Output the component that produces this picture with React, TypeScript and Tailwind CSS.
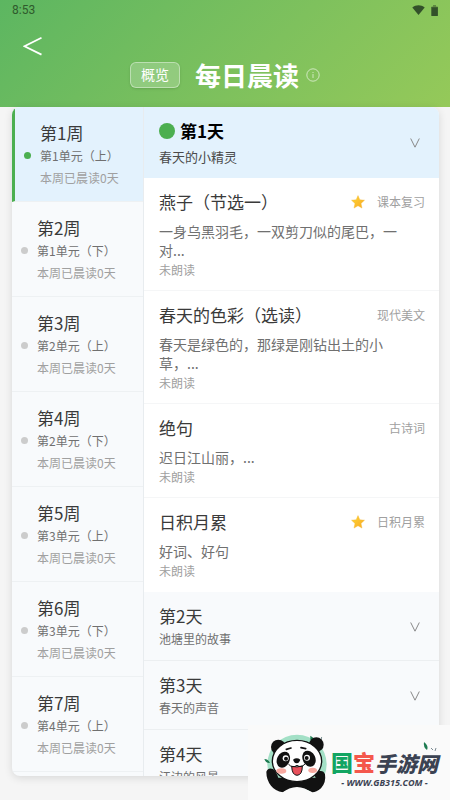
import { useState } from 'react';

interface Week {
  id: number;
  title: string;
  unit: string;
  readDays: number;
}

interface Article {
  title: string;
  excerpt: string;
  tag: string;
  starred?: boolean;
}

interface Day {
  id: number;
  title: string;
  topic: string;
  articles: Article[];
}

const weeks: Week[] = [
  { id: 1, title: '第1周', unit: '第1单元（上）', readDays: 0 },
  { id: 2, title: '第2周', unit: '第1单元（下）', readDays: 0 },
  { id: 3, title: '第3周', unit: '第2单元（上）', readDays: 0 },
  { id: 4, title: '第4周', unit: '第2单元（下）', readDays: 0 },
  { id: 5, title: '第5周', unit: '第3单元（上）', readDays: 0 },
  { id: 6, title: '第6周', unit: '第3单元（下）', readDays: 0 },
  { id: 7, title: '第7周', unit: '第4单元（上）', readDays: 0 },
];

const days: Day[] = [
  {
    id: 1,
    title: '第1天',
    topic: '春天的小精灵',
    articles: [
      {
        title: '燕子（节选一）',
        excerpt: '一身乌黑羽毛，一双剪刀似的尾巴，一对...',
        tag: '课本复习',
        starred: true,
      },
      {
        title: '春天的色彩（选读）',
        excerpt: '春天是绿色的，那绿是刚钻出土的小草，...',
        tag: '现代美文',
      },
      { title: '绝句', excerpt: '迟日江山丽，...', tag: '古诗词' },
      { title: '日积月累', excerpt: '好词、好句', tag: '日积月累', starred: true },
    ],
  },
  { id: 2, title: '第2天', topic: '池塘里的故事', articles: [] },
  { id: 3, title: '第3天', topic: '春天的声音', articles: [] },
  { id: 4, title: '第4天', topic: '江边的风景', articles: [] },
];

const StatusBar = () => (
  <div className="flex h-5 items-center justify-between px-3 text-[#2f5a2c]">
    <span className="font-['Roboto',sans-serif] text-xs">8:53</span>
    <div className="flex items-center gap-1.5 text-[#33502a]">
      <svg width="13" height="10" viewBox="0 0 13 10" fill="currentColor" aria-hidden="true">
        <path d="M6.5 10 0.3 2.6C3.8-.5 9.2-.5 12.7 2.6Z" />
      </svg>
      <svg width="7" height="11" viewBox="0 0 7 11" fill="currentColor" aria-hidden="true">
        <path opacity=".5" d="M2 0h3v1.4h1.3a.6.6 0 0 1 .6.6v1H.3V2a.6.6 0 0 1 .6-.6H2Z" />
        <path d="M.3 2.2h6.6v8.2a.6.6 0 0 1-.6.6H.9a.6.6 0 0 1-.6-.6Z" />
      </svg>
    </div>
  </div>
);

const Header = () => (
  <header className="shrink-0 bg-linear-135 from-[#5cb661] to-[#95c959] pb-[19px] text-white">
    <StatusBar />
    <button type="button" aria-label="返回" className="ml-[23px] mt-4 block">
      <svg width="19" height="20" viewBox="0 0 19 20" fill="none" stroke="currentColor" strokeWidth="1.8">
        <path d="M18.5 1.8 1.5 10.2 18.5 18.6" />
      </svg>
    </button>
    <div className="mt-1.5 flex h-[26px] items-center justify-center">
      <button
        type="button"
        className="h-[26px] w-[50px] rounded-md border border-white/40 bg-white/20 pb-0.5 text-sm leading-none shadow-sm"
      >
        概览
      </button>
      <h1 className="ml-[15px] text-[26px] font-bold leading-none">每日晨读</h1>
      <button type="button" aria-label="说明" className="ml-[7px] text-white/60">
        <svg width="14" height="14" viewBox="0 0 14 14" fill="none" stroke="currentColor">
          <circle cx="7" cy="7" r="6.2" />
          <path d="M7 6v4M7 4v1" />
        </svg>
      </button>
    </div>
  </header>
);

interface WeekItemProps {
  week: Week;
  active: boolean;
  onSelect: () => void;
}

const WeekItem = ({ week, active, onSelect }: WeekItemProps) => (
  <button
    type="button"
    onClick={onSelect}
    className={`flex w-full items-center gap-[9px] border-b border-[#eef1f3] pb-3 pl-[9px] pt-3.5 text-left ${
      active ? 'border-l-3 border-l-[#4caf50] bg-[#e3f2fd]' : ''
    }`}
  >
    <span className={`size-[7px] shrink-0 rounded-full ${active ? 'bg-[#4caf50]' : 'bg-[#cccccc]'}`} />
    <span className="block whitespace-nowrap">
      <span className="block text-[17px] leading-6 text-[#3a3a3a]">{week.title}</span>
      <span className="block text-xs leading-[22px] text-[#707070]">{week.unit}</span>
      <span className="block text-xs leading-[22px] text-[#a0a0a0]">本周已晨读{week.readDays}天</span>
    </span>
  </button>
);

const StarIcon = () => (
  <svg width="14" height="14" viewBox="0 0 14 14" className="shrink-0" aria-label="重点">
    <defs>
      <linearGradient id="star" x1="0" y1="0" x2="1" y2="1">
        <stop offset="0" stopColor="#fdd835" />
        <stop offset="1" stopColor="#f9a825" />
      </linearGradient>
    </defs>
    <path
      d="m7 .6 1.8 4.2 4.7.4-3.5 3.2 1 4.7L7 10.7 3 13.1l1-4.7L.5 5.2l4.7-.4Z"
      fill="url(#star)"
      stroke="#f2b632"
      strokeWidth=".4"
      strokeLinejoin="round"
    />
  </svg>
);

const ArticleCard = ({ article }: { article: Article }) => (
  <li className="border-b border-[#f5f6f7] bg-white pb-2.5 pl-[15px] pr-3.5 pt-3 last:border-white">
    <div className="flex items-center">
      <h3 className="flex-1 text-[17px] leading-6 text-[#3a3a3a]">{article.title}</h3>
      {article.starred && <StarIcon />}
      <span className="ml-3 text-xs text-[#a0a0a0]">{article.tag}</span>
    </div>
    <p className="mt-2 pr-5 text-sm leading-[19px] text-[#707070]">{article.excerpt}</p>
    <p className="text-xs leading-5 text-[#a0a0a0]">未朗读</p>
  </li>
);

interface DaySectionProps {
  day: Day;
  open: boolean;
  onToggle: () => void;
}

const DaySection = ({ day, open, onToggle }: DaySectionProps) => (
  <section>
    <button
      type="button"
      onClick={onToggle}
      aria-expanded={open}
      className={`flex w-full items-center justify-between pl-[15px] pr-[19px] pt-3 text-left ${
        open ? 'bg-[#e3f2fd] pb-[11px]' : 'border-b border-[#eceff1] pb-2.5'
      }`}
    >
      <span className="block">
        <span
          className={`flex items-center gap-[5px] text-[17px] leading-6 ${
            open ? 'font-bold text-black' : 'text-[#3a3a3a]'
          }`}
        >
          {open && <span className="size-4 rounded-full bg-[#4caf50]" />}
          {day.title}
        </span>
        <span
          className={`block ${
            open ? 'mt-1 text-[13px] leading-5 text-[#4a4a4a]' : 'text-xs leading-[22px] text-[#707070]'
          }`}
        >
          {day.topic}
        </span>
      </span>
      <svg width="10" height="10" viewBox="0 0 10 10" fill="none" stroke="#888888" aria-hidden="true">
        <path d="M.7.5 5 9.2 9.3.5" />
      </svg>
    </button>
    {open && (
      <ul>
        {day.articles.map(article => (
          <ArticleCard key={article.title} article={article} />
        ))}
      </ul>
    )}
  </section>
);

const Panda = () => (
  <svg width="65" height="60" viewBox="70 60 195 180" aria-hidden="true">
    <circle cx="172" cy="154" r="89" fill="#a3e0c6" />
    {/* leaves */}
    <path d="M212 68q18 10 12 26-14-8-12-26M74 138q12 0 17 12-12 2-17-12" fill="#1d7a50" />
    <path d="m236 78 4 6m6-12-2 9" stroke="#335555" strokeWidth="2" />
    {/* body and raised paws */}
    <path
      d="M80 176q6-14 20-8 10 8 16 26h112l-6-12q4-12 18-8 12-2 16 10 4 24-12 42-14 12-26 12-42-24-88 0-24-4-36-20-14-18-14-42"
      fill="#121212"
    />
    <path d="M126 240q46-36 92 0Z" fill="#fafafa" />
    {/* ears */}
    <circle cx="116" cy="102" r="22" fill="#121212" />
    <circle cx="230" cy="95" r="22" fill="#121212" />
    {/* face */}
    <ellipse cx="172" cy="144" rx="74" ry="62" fill="#fff" stroke="#121212" strokeWidth="4" />
    <ellipse cx="131" cy="140" rx="19" ry="25" transform="rotate(25 131 140)" fill="#121212" />
    <ellipse cx="208" cy="137" rx="19" ry="25" transform="rotate(-25 208 137)" fill="#121212" />
    <circle cx="138" cy="136" r="9" fill="#fff" />
    <circle cx="202" cy="134" r="9" fill="#fff" />
    <circle cx="139" cy="137" r="6" fill="#121212" />
    <circle cx="201" cy="135" r="6" fill="#121212" />
    <path d="m140 109 14-4m30-1 14 3" stroke="#121212" strokeWidth="5" strokeLinecap="round" />
    <ellipse cx="125" cy="174" rx="15" ry="8" fill="#f8a9a0" />
    <ellipse cx="219" cy="172" rx="13" ry="8" fill="#f8a9a0" />
    <path d="M160 140q11-8 22 0-4 11-11 11-7 0-11-11" fill="#121212" />
    <path d="M156 160q16 4 32-1 0 27-16 28-15-1-16-27" fill="#e8505b" stroke="#121212" strokeWidth="3" />
    <path d="M146 153q12 14 26 4 12 9 24-4" fill="none" stroke="#121212" strokeWidth="3" />
  </svg>
);

const SiteBadge = () => (
  <div className="absolute bottom-0 right-0 flex h-[75px] w-[202px] items-center bg-[#fafafa] pl-[15px]">
    <Panda />
    <div className="ml-[3px] whitespace-nowrap pt-2">
      <p className="flex items-end">
        <span className="text-[22px] font-black leading-8 text-[#12a562]">国</span>
        <span className="text-[22px] font-black leading-8 text-[#f4574c]">宝</span>
        <span className="text-[21px] font-black italic leading-7 text-[#3b4252]">手游网</span>
      </p>
      <p className="text-center font-['Open_Sans',sans-serif] text-[9px] font-bold italic leading-3 text-[#3b4252]">
        - WWW.GB315.COM -
      </p>
    </div>
    <svg className="absolute right-[13px] top-[17px]" width="14" height="11" viewBox="0 0 14 11" aria-hidden="true">
      <path d="M1 0q5 4 3 8Q0 5 1 0" fill="#1d7a50" />
      <path d="m8 6 2 2m3-2-1 3" stroke="#7b8a92" />
    </svg>
  </div>
);

const App = () => {
  const [activeWeek, setActiveWeek] = useState(1);
  const [openDay, setOpenDay] = useState<number | null>(1);

  return (
    <div className="relative flex h-screen flex-col overflow-hidden bg-[#f5f5f5] font-['Noto_Sans_CJK_SC',sans-serif]">
      <Header />
      <main className="mb-6 ml-3 mr-[11px] flex min-h-0 flex-1 overflow-hidden rounded-lg bg-[#f8fafc] shadow-[0_2px_8px_rgba(0,0,0,0.12)]">
        <nav className="w-[132px] shrink-0 overflow-hidden border-r border-[#e8ecef]">
          {weeks.map(week => (
            <WeekItem
              key={week.id}
              week={week}
              active={week.id === activeWeek}
              onSelect={() => setActiveWeek(week.id)}
            />
          ))}
        </nav>
        <div className="min-w-0 flex-1 overflow-hidden">
          {days.map(day => (
            <DaySection
              key={day.id}
              day={day}
              open={day.id === openDay}
              onToggle={() => setOpenDay(day.id === openDay ? null : day.id)}
            />
          ))}
        </div>
      </main>
      <SiteBadge />
    </div>
  );
};

export default App;
